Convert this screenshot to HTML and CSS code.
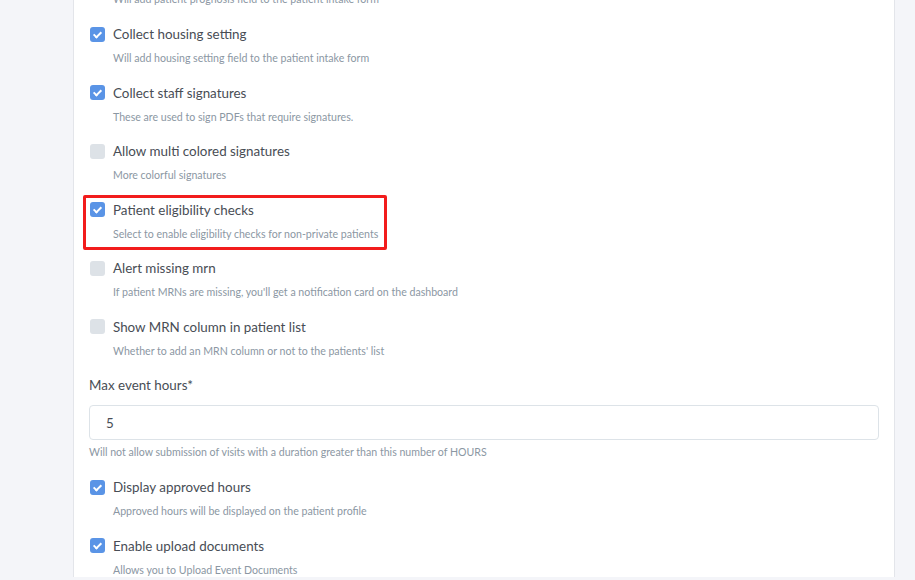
FILE: index.html
```html
<!DOCTYPE html>
<html lang="en">
<head>
  <meta charset="UTF-8">
  <title>Settings</title>
  <link rel="stylesheet" href="styles.css">
</head>
<body>
  <div class="card">
    <p class="desc cut">Will add patient prognosis field to the patient intake form</p>

    <div class="option">
      <label><span class="box checked"></span> Collect housing setting</label>
      <p class="desc">Will add housing setting field to the patient intake form</p>
    </div>
    <div class="option">
      <label><span class="box checked"></span> Collect staff signatures</label>
      <p class="desc">These are used to sign PDFs that require signatures.</p>
    </div>
    <div class="option">
      <label><span class="box"></span> Allow multi colored signatures</label>
      <p class="desc">More colorful signatures</p>
    </div>
    <div class="option highlight">
      <label><span class="box checked"></span> Patient eligibility checks</label>
      <p class="desc">Select to enable eligibility checks for non-private patients</p>
    </div>
    <div class="option">
      <label><span class="box"></span> Alert missing mrn</label>
      <p class="desc">If patient MRNs are missing, you'll get a notification card on the dashboard</p>
    </div>
    <div class="option">
      <label><span class="box"></span> Show MRN column in patient list</label>
      <p class="desc">Whether to add an MRN column or not to the patients' list</p>
    </div>

    <div class="field">
      <div class="field-label">Max event hours*</div>
      <div class="text-input">5</div>
      <p class="desc">Will not allow submission of visits with a duration greater than this number of HOURS</p>
    </div>

    <div class="option">
      <label><span class="box checked"></span> Display approved hours</label>
      <p class="desc">Approved hours will be displayed on the patient profile</p>
    </div>
    <div class="option">
      <label><span class="box checked"></span> Enable upload documents</label>
      <p class="desc">Allows you to Upload Event Documents</p>
    </div>
  </div>
</body>
</html>
```

FILE: styles.css
```css
body {
  margin: 0;
  background-color: #f4f5f9;
  font-family: Lato, "Open Sans", sans-serif;
  color: #484d55;
  height: 580px;
  overflow: hidden;
}
.card {
  margin-left: 73px;
  width: 822px;
  background-color: #ffffff;
  border-left: 1px solid #e3e5ea;
  border-right: 1px solid #e3e5ea;
  padding: 0 15px;
  box-sizing: border-box;
  min-height: 580px;
}
.desc {
  margin: 0;
  font-size: 10.6px;
  color: #8b97a3;
  line-height: 14px;
  white-space: nowrap;
}
.cut {
  margin-top: -8px;
  padding-left: 24px;
  margin-bottom: 18px;
}
.option {
  margin-bottom: 17.5px;
}
.option label {
  display: flex;
  align-items: center;
  gap: 8px;
  font-size: 13.4px;
  line-height: 20px;
  padding-left: 1px;
}
.option .desc {
  padding-left: 24px;
  margin-top: 7px;
}
.box {
  width: 15px;
  height: 15px;
  border-radius: 3px;
  background-color: #dde2e7;
  position: relative;
  flex-shrink: 0;
}
.box.checked {
  background-color: #5a94e6;
}
.box.checked::after {
  content: "";
  position: absolute;
  left: 5px;
  top: 3px;
  width: 3px;
  height: 6px;
  border: solid #ffffff;
  border-width: 0 2px 2px 0;
  transform: rotate(45deg);
}
.highlight {
  border: 3px solid #f21c1c;
  border-radius: 2px;
  margin-top: -5px;
  margin-bottom: 8.5px;
  margin-left: -6px;
  padding: 2px 0 6px 3px;
  width: 304px;
  box-sizing: border-box;
}
.field {
  margin-bottom: 18px;
}
.field-label {
  font-size: 13.4px;
  line-height: 20px;
}
.text-input {
  margin-top: 10px;
  height: 35px;
  border: 1px solid #dde3e8;
  border-radius: 4px;
  box-sizing: border-box;
  padding: 0 16px;
  display: flex;
  align-items: center;
  font-size: 13.4px;
  margin-bottom: 5px;
}
```
